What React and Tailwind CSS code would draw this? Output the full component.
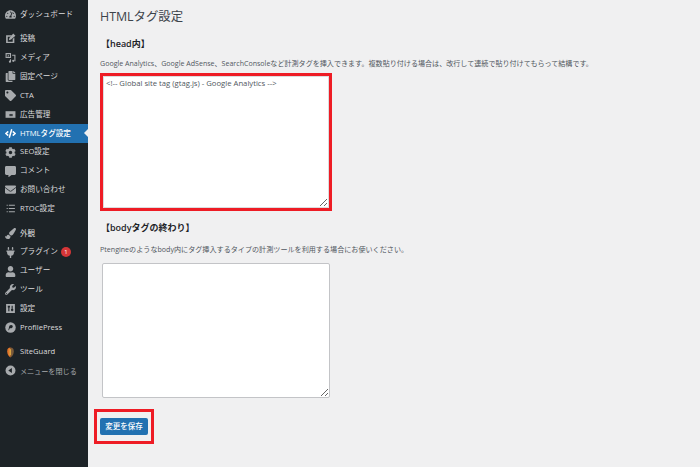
import { FaTachometerAlt, FaCopy, FaTag, FaCode, FaCog, FaCommentAlt, FaEnvelope, FaPaintBrush, FaPlug, FaUser, FaWrench } from "react-icons/fa"

const font = "font-['Open_Sans','Noto_Sans_CJK_JP',sans-serif]"

const PostIcon = (props) => (
  <svg viewBox="0 0 20 20" fill="currentColor" {...props}>
    <path d="M2 4h11l-3 3H5v9h9v-5l3-3v10H2z" />
    <path d="M15 1l4 4-8 7-4 1 1-4z" />
  </svg>
)

const MediaIcon = (props) => (
  <svg viewBox="0 0 20 20" fill="currentColor" {...props}>
    <path d="M1 2h10v9H1zM3 4v5h6V4z" fillRule="evenodd" />
    <path d="M4 8l2-3 2 3z" />
    <path d="M13 5h6v12h-2V7h-4zM9 13h2v4.500a2 2 0 1 1-2-2z" />
    <circle cx="15" cy="16" r="2" />
  </svg>
)

const AdIcon = (props) => (
  <svg viewBox="0 0 20 20" fill="currentColor" {...props}>
    <path d="M1 4h18v12H1z" />
    <path d="M8 9h6v4H8z" fill="#1d2327" opacity="0.8" />
  </svg>
)

const ListIcon = (props) => (
  <svg viewBox="0 0 20 20" fill="currentColor" {...props}>
    <path d="M3 3h2v2H3zM7 3h11v2H7zM3 9h2v2H3zM7 9h11v2H7zM3 15h2v2H3zM7 15h11v2H7z" />
  </svg>
)

const SettingsIcon = (props) => (
  <svg viewBox="0 0 20 20" fill="currentColor" {...props}>
    <path fillRule="evenodd" d="M2 2h16v16H2zM5 5v3h1v7h2V8h1V5zM12 5v6h-1v3h1v1h2v-1h1v-3h-1V5z" />
  </svg>
)

const ProfileIcon = (props) => (
  <svg viewBox="0 0 20 20" {...props}>
    <circle cx="10" cy="10" r="9.500" fill="currentColor" />
    <path d="M6 15l2-8c3-3 7-1 6 2-1 2-3 3-5 2l-2 4z" fill="#1d2327" />
  </svg>
)

const SiteGuardIcon = (props) => (
  <svg viewBox="0 0 20 20" {...props}>
    <path d="M10 1c4 0 6 2 6 7 0 5-3 9-6 11z" fill="#7a5a3a" />
    <path d="M10 1C6 1 4 3 4 8c0 5 3 9 6 11z" fill="#e2752b" />
    <path d="M8 4h3v11H8z" fill="#d9a441" />
  </svg>
)

const CollapseIcon = (props) => (
  <svg viewBox="0 0 20 20" {...props}>
    <circle cx="10" cy="10" r="9" fill="currentColor" />
    <path d="M12.500 5.500v9L6 10z" fill="#1d2327" />
  </svg>
)

const menuGroups = [
  [{ label: "ダッシュボード", icon: FaTachometerAlt }],
  [
    { label: "投稿", icon: PostIcon },
    { label: "メディア", icon: MediaIcon },
    { label: "固定ページ", icon: FaCopy },
    { label: "CTA", icon: FaTag },
    { label: "広告管理", icon: AdIcon },
    { label: "HTMLタグ設定", icon: FaCode, active: true },
    { label: "SEO設定", icon: FaCog },
    { label: "コメント", icon: FaCommentAlt },
    { label: "お問い合わせ", icon: FaEnvelope },
    { label: "RTOC設定", icon: ListIcon },
  ],
  [
    { label: "外観", icon: FaPaintBrush },
    { label: "プラグイン", icon: FaPlug, badge: 1 },
    { label: "ユーザー", icon: FaUser },
    { label: "ツール", icon: FaWrench },
    { label: "設定", icon: SettingsIcon },
    { label: "ProfilePress", icon: ProfileIcon },
  ],
  [
    { label: "SiteGuard", icon: SiteGuardIcon },
    { label: "メニューを閉じる", icon: CollapseIcon, muted: true },
  ],
]

const MenuItem = ({ item }) => {
  const Icon = item.icon
  return (
    <div
      className={`relative flex h-[18.900px] items-center pl-[5px] ${
        item.active
          ? "bg-[#2271b1] text-[7.600px] font-medium text-white"
          : item.muted
            ? "text-[7.100px] text-[#a7aaad]"
            : "text-[7.600px] text-[#dcdcde]"
      }`}
    >
      <span className={`flex w-[15px] shrink-0 items-center justify-start ${item.active ? "text-white" : "text-[#a7aaad]"}`}>
        <Icon className="h-[11px] w-[11px]" />
      </span>
      <span className="whitespace-nowrap">{item.label}</span>
      {item.badge && (
        <span className="ml-[3px] flex h-[10px] w-[10px] items-center justify-center rounded-full bg-[#d63638] text-[6px] text-white">
          {item.badge}
        </span>
      )}
      {item.active && (
        <span className="absolute right-0 top-[5px] h-0 w-0 border-y-[4.500px] border-r-[4.500px] border-y-transparent border-r-[#f0f0f1]" />
      )}
    </div>
  )
}

const App = () => {
  return (
    <div className={`flex h-[467px] w-[700px] overflow-hidden bg-[#f0f0f1] ${font}`}>
      {/* Admin menu */}
      <aside className="flex w-[88px] shrink-0 flex-col gap-[5.500px] bg-[#1d2327] pt-[5px]">
        {menuGroups.map((group, i) => (
          <div key={i}>
            {group.map((item) => (
              <MenuItem key={item.label} item={item} />
            ))}
          </div>
        ))}
      </aside>

      {/* Settings form */}
      <main className="flex-1 pl-3 text-[#3c434a]">
        <h1 className="mt-[8px] text-[12.400px] leading-[18px] text-[#3c434a]">HTMLタグ設定</h1>

        <h2 className="mt-[11px] pl-[1px] text-[9px] font-semibold leading-[14px] text-[#1d2327]">【head内】</h2>
        <p className="mt-[7px] whitespace-nowrap text-[7.070px] leading-[10px] text-[#50575e]">
          Google Analytics、Google AdSense、SearchConsoleなど計測タグを挿入できます。複数貼り付ける場合は、改行して連続で貼り付けてもらって結構です。
        </p>

        <div className="mt-[5px] h-[138px] w-[232px] border-[3px] border-[#ee1c25]">
          <textarea
            readOnly
            className="block h-full w-full resize border border-[#dcdcde] bg-white px-[2px] py-[1px] text-[7.700px] leading-[10px] text-[#50575e] outline-none"
            value="<!-- Global site tag (gtag.js) - Google Analytics -->"
          />
        </div>

        <h2 className="mt-[10px] pl-[1px] text-[9px] font-semibold leading-[14px] text-[#1d2327]">【bodyタグの終わり】</h2>
        <p className="mt-[9px] whitespace-nowrap text-[7.100px] leading-[10px] text-[#50575e]">
          Ptengineのようなbody内にタグ挿入するタイプの計測ツールを利用する場合にお使いください。
        </p>

        <textarea
          readOnly
          className="mt-[9px] ml-[2px] block h-[135px] w-[228px] resize rounded-[2px] border border-[#c3c4c7] bg-white outline-none"
        />

        <div className="mt-[11px] ml-[-6px] flex h-[35px] w-[60px] items-center justify-center border-[3px] border-[#ee1c25]">
          <button className="h-[17px] w-[48px] rounded-[2px] bg-[#2271b1] text-[7.500px] font-medium text-white">
            変更を保存
          </button>
        </div>
      </main>
    </div>
  )
}

export default App
